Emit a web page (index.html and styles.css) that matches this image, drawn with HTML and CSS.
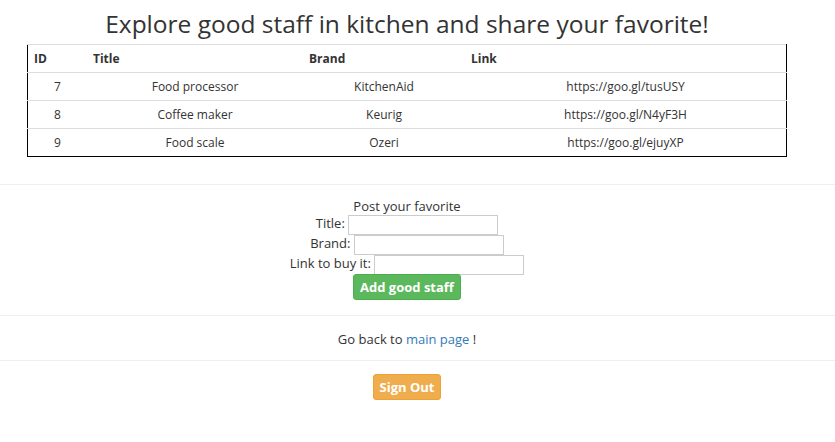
FILE: index.html
```html
<!DOCTYPE html>
<html>
<head>
<meta charset="utf-8">
<link rel="stylesheet" href="styles.css">
</head>
<body>
<div class="wrap">
  <h1 class="title">Explore good staff in kitchen and share your favorite!</h1>
  <table class="items">
    <thead>
      <tr><th class="c1">ID</th><th class="c2">Title</th><th class="c3">Brand</th><th class="c4">Link</th></tr>
    </thead>
    <tbody>
      <tr><td>7</td><td>Food processor</td><td>KitchenAid</td><td>https://goo.gl/tusUSY</td></tr>
      <tr><td>8</td><td>Coffee maker</td><td>Keurig</td><td>https://goo.gl/N4yF3H</td></tr>
      <tr><td>9</td><td>Food scale</td><td>Ozeri</td><td>https://goo.gl/ejuyXP</td></tr>
    </tbody>
  </table>
</div>
<hr class="rule rule-first">
<div class="wrap form">
  <div class="line heading">Post your favorite</div>
  <div class="line">Title: <input type="text" class="field"></div>
  <div class="line">Brand: <input type="text" class="field"></div>
  <div class="line">Link to buy it: <input type="text" class="field"></div>
  <div class="line action"><button class="btn btn-green">Add good staff</button></div>
</div>
<hr class="rule rule-second">
<div class="wrap back">Go back to <a href="#" class="link">main page</a> !</div>
<hr class="rule rule-third">
<div class="wrap signout"><button class="btn btn-orange">Sign Out</button></div>
</body>
</html>
```
FILE: styles.css
```css
html, body {
  margin: 0;
  padding: 0;
  background: #fff;
}
body {
  font-family: "Comic Sans MS", "Open Sans", sans-serif;
  font-size: 13px;
  color: #333;
  line-height: 20px;
}
.wrap {
  width: 814px;
  text-align: center;
}
.title {
  margin: 0;
  padding-top: 7px;
  height: 37px;
  font-size: 24.5px;
  font-weight: normal;
  line-height: 34px;
  color: #333;
}
.items {
  width: 760px;
  margin-left: 27px;
  border-collapse: collapse;
  border-left: 1px solid #000;
  border-right: 1px solid #000;
  border-bottom: 1px solid #000;
  border-top: 1px solid #ddd;
  font-size: 12px;
}
.items th {
  text-align: left;
  font-weight: bold;
  height: 27px;
  padding: 0 6px;
  border-bottom: 1px solid #ddd;
  color: #333;
}
.items td {
  text-align: center;
  height: 27px;
  padding: 0;
  border-top: 1px solid #ddd;
}
.items tbody tr:first-child td { border-top: none; }
.c1 { width: 47px; }
.c2 { width: 204px; }
.c3 { width: 150px; }
.rule {
  border: 0;
  border-top: 1px solid #eee;
  margin: 0;
}
.rule-first { margin-top: 27px; }
.form { padding-top: 11px; }
.line { height: 20px; }
.heading { height: 17px; line-height: 20px; }
.field {
  width: 146px;
  height: 16px;
  border: 1px solid #ccc;
  padding: 1px;
  margin: 0;
  vertical-align: middle;
  font: inherit;
}
.btn {
  font-family: inherit;
  font-weight: bold;
  color: #fff;
  border-radius: 3px;
  font-size: 13px;
  padding: 0 6px;
  height: 26px;
  line-height: 24px;
  cursor: pointer;
}
.action { height: 26px; margin-top: 1px; }
.btn-green {
  background: #5cb85c;
  border: 1px solid #4cae4c;
}
.btn-orange {
  background: #f0ad4e;
  border: 1px solid #eea236;
}
.rule-second { margin-top: 15px; }
.back { padding: 13px 0 11px; }
.link { color: #337ab7; text-decoration: none; }
.signout { padding-top: 13px; }
```
